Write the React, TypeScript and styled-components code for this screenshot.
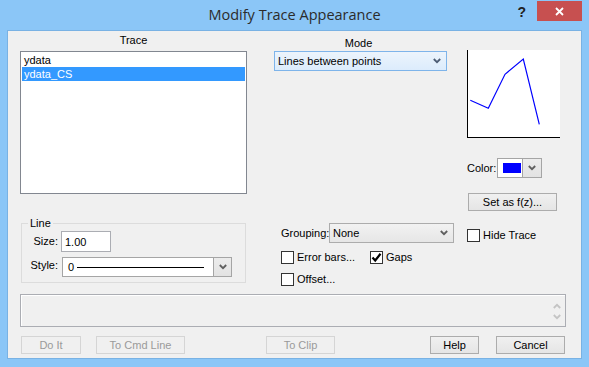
import React from "react";
import styled, { createGlobalStyle } from "styled-components";

const GlobalStyle = createGlobalStyle`
  html, body { margin: 0; padding: 0; background: #8bc6f7; }
  body { font-family: "Liberation Sans", Arial, sans-serif; font-size: 11px; color: #000; }
  * { box-sizing: border-box; }
`;

const Window = styled.div`
  width: 589px;
  height: 367px;
  background: #8bc6f7;
  padding: 0 7px 8px;
  display: flex;
  flex-direction: column;
`;

const TitleBar = styled.div`
  height: 30px;
  display: grid;
  grid-template-columns: 1fr auto 1fr;
  align-items: start;
`;

const Title = styled.div`
  grid-column: 2;
  font-family: "Open Sans", "Noto Sans", sans-serif;
  font-size: 14.5px;
  color: #2b2b2b;
  line-height: 30px;
  white-space: nowrap;
`;

const Controls = styled.div`
  grid-column: 3;
  justify-self: end;
  display: flex;
  align-items: flex-start;
`;

const HelpGlyph = styled.span`
  font-family: "Liberation Sans", Arial, sans-serif;
  font-weight: bold;
  font-size: 14px;
  line-height: 14px;
  color: #222;
  margin: 5px 11px 0 0;
`;

const CloseBtn = styled.div`
  width: 45px;
  height: 20px;
  margin-top: 1px;
  background: #c75050;
  display: flex;
  align-items: center;
  justify-content: center;
`;

const Client = styled.div`
  flex: 1;
  border: 1px solid #79b2e4;
  background: #f0f0f0;
  padding: 3px 15px 0 12px;
  display: flex;
  flex-direction: column;
`;

const TopArea = styled.div`
  display: flex;
  align-items: flex-start;
`;

const Column = styled.div<{ $w: number; $ml?: number }>`
  width: ${(p) => p.$w}px;
  margin-left: ${(p) => p.$ml ?? 0}px;
  display: flex;
  flex-direction: column;
`;

const CenterLabel = styled.div<{ $mt?: number; $pr?: number }>`
  height: 13px;
  line-height: 13px;
  text-align: center;
  margin-top: ${(p) => p.$mt ?? 0}px;
  padding-right: ${(p) => p.$pr ?? 0}px;
`;

const ListBox = styled.div`
  margin-top: 4px;
  height: 143px;
  background: #fff;
  border: 1px solid #828790;
  padding: 1px;
`;

const ListItem = styled.div<{ $sel?: boolean }>`
  height: 14px;
  line-height: 14px;
  padding-left: 2px;
  background: ${(p) => (p.$sel ? "#3399ff" : "transparent")};
  color: ${(p) => (p.$sel ? "#fff" : "#000")};
`;

const Group = styled.div`
  position: relative;
  margin: 29px 0 0 1px;
  width: 225px;
  height: 60px;
  border: 1px solid #dcdcdc;
  padding: 7px 0 0 0;
  display: grid;
  grid-template-columns: 36px auto;
  column-gap: 3px;
  row-gap: 5px;
  align-content: start;
`;

const Legend = styled.span`
  position: absolute;
  top: -7px;
  left: 6px;
  padding: 0 2px;
  background: #f0f0f0;
  line-height: 13px;
`;

const FieldLabel = styled.div<{ $top?: boolean }>`
  text-align: right;
  align-self: ${(p) => (p.$top ? "start" : "center")};
  margin-top: ${(p) => (p.$top ? 2 : 0)}px;
  line-height: 13px;
`;

const TextInput = styled.div`
  width: 50px;
  height: 21px;
  background: #fff;
  border: 1px solid #abadb3;
  padding-left: 3px;
  display: flex;
  align-items: center;
`;

const Combo = styled.div<{ $w: number; $blue?: boolean }>`
  width: ${(p) => p.$w}px;
  height: 20px;
  border: 1px solid ${(p) => (p.$blue ? "#7eb4ea" : "#acacac")};
  background: ${(p) =>
    p.$blue
      ? "linear-gradient(#ecf4fc, #dcecfc)"
      : "linear-gradient(#f2f2f2, #e6e6e6)"};
  display: flex;
  align-items: center;
  justify-content: space-between;
  padding: 0 5px 0 3px;
`;

const FieldCombo = styled.div<{ $w: number; $ml?: number }>`
  width: ${(p) => p.$w}px;
  margin-left: ${(p) => p.$ml ?? 0}px;
  height: 20px;
  border: 1px solid #a5a5a5;
  background: #fff;
  display: flex;
`;

const FieldPart = styled.div`
  flex: 1;
  display: flex;
  align-items: center;
  padding-left: 5px;
`;

const DropPart = styled.div<{ $w: number }>`
  width: ${(p) => p.$w}px;
  background: linear-gradient(#ececec, #e2e2e2);
  border-left: 1px solid #a5a5a5;
  display: flex;
  align-items: center;
  justify-content: center;
`;

const StyleLine = styled.div`
  flex: 1;
  height: 1px;
  background: #000;
  margin: 0 9px 0 3px;
`;

const Swatch = styled.div`
  width: 18px;
  height: 10px;
  background: #0000ff;
`;

const Row = styled.div<{ $mt?: number; $pl?: number }>`
  display: flex;
  align-items: center;
  margin-top: ${(p) => p.$mt ?? 0}px;
  padding-left: ${(p) => p.$pl ?? 0}px;
`;

const InlineLabel = styled.span<{ $w: number }>`
  width: ${(p) => p.$w}px;
  line-height: 13px;
`;

const CheckItem = styled.label<{ $w?: number }>`
  display: flex;
  align-items: center;
  gap: 3px;
  width: ${(p) => (p.$w ? `${p.$w}px` : "auto")};
  line-height: 13px;
`;

const Box = styled.span`
  width: 13px;
  height: 13px;
  border: 1px solid #333;
  background: #fff;
  display: flex;
  align-items: center;
  justify-content: center;
  flex: none;
`;

const Preview = styled.div`
  margin-top: 16px;
  width: 93px;
  height: 88px;
  background: #fff;
  border-left: 1px solid #000;
  border-bottom: 1px solid #000;
`;

const Button = styled.div<{ $w: number; $ml?: number; $disabled?: boolean }>`
  width: ${(p) => p.$w}px;
  height: 18px;
  margin-left: ${(p) => p.$ml ?? 0}px;
  border: 1px solid ${(p) => (p.$disabled ? "#d5d5d5" : "#acacac")};
  background: ${(p) =>
    p.$disabled ? "#f0f0f0" : "linear-gradient(#f0f0f0, #e5e5e5)"};
  color: ${(p) => (p.$disabled ? "#9a9a9a" : "#000")};
  display: flex;
  align-items: center;
  justify-content: center;
  line-height: 13px;
  flex: none;
`;

const MessageBox = styled.div`
  margin-top: 8px;
  height: 33px;
  border: 1px solid #abadb3;
  background: #f0f0f0;
  box-shadow: inset 1px 1px 0 #fff;
  display: flex;
  justify-content: flex-end;
`;

const ScrollCol = styled.div`
  width: 17px;
  display: flex;
  flex-direction: column;
  align-items: center;
  justify-content: space-between;
  padding: 8px 0 6px;
`;

const ButtonRow = styled.div`
  margin-top: 9px;
  display: flex;
  align-items: center;
`;

const Chevron = ({ color = "#5f5f5f", up = false }: { color?: string; up?: boolean }) => (
  <svg width="8" height="6" viewBox="0 0 8 6">
    <polyline
      points={up ? "0.8,5 4,1.8 7.2,5" : "0.8,1 4,4.2 7.2,1"}
      fill="none"
      stroke={color}
      strokeWidth="1.8"
    />
  </svg>
);

const CheckMark = () => (
  <svg width="11" height="11" viewBox="0 0 11 11">
    <polyline points="1.5,5.5 4.2,8.5 9.5,1.8" fill="none" stroke="#000" strokeWidth="2.2" />
  </svg>
);

export default function App() {
  return (
    <>
      <GlobalStyle />
      <Window>
        <TitleBar>
          <Title>Modify Trace Appearance</Title>
          <Controls>
            <HelpGlyph>?</HelpGlyph>
            <CloseBtn>
              <svg width="9" height="9" viewBox="0 0 9 9">
                <path d="M1 1 L8 8 M8 1 L1 8" stroke="#fff" strokeWidth="1.8" />
              </svg>
            </CloseBtn>
          </Controls>
        </TitleBar>
        <Client>
          <TopArea>
            <Column $w={227}>
              <CenterLabel>Trace</CenterLabel>
              <ListBox>
                <ListItem>ydata</ListItem>
                <ListItem $sel>ydata_CS</ListItem>
              </ListBox>
              <Group>
                <Legend>Line</Legend>
                <FieldLabel>Size:</FieldLabel>
                <TextInput>1.00</TextInput>
                <FieldLabel $top>Style:</FieldLabel>
                <FieldCombo $w={170} $ml={1}>
                  <FieldPart>
                    0<StyleLine />
                  </FieldPart>
                  <DropPart $w={18}>
                    <Chevron />
                  </DropPart>
                </FieldCombo>
              </Group>
            </Column>
            <Column $w={180} $ml={27}>
              <CenterLabel $mt={3} $pr={11}>Mode</CenterLabel>
              <Row $mt={1}>
                <Combo $w={173} $blue>
                  <span>Lines between points</span>
                  <Chevron color="#4d5d75" />
                </Combo>
              </Row>
              <Row $mt={152} $pl={7}>
                <InlineLabel $w={48}>Grouping:</InlineLabel>
                <Combo $w={125}>
                  <span>None</span>
                  <Chevron />
                </Combo>
              </Row>
              <Row $mt={8} $pl={7}>
                <CheckItem $w={89}>
                  <Box />
                  Error bars...
                </CheckItem>
                <CheckItem>
                  <Box>
                    <CheckMark />
                  </Box>
                  Gaps
                </CheckItem>
              </Row>
              <Row $mt={9} $pl={7}>
                <CheckItem>
                  <Box />
                  Offset...
                </CheckItem>
              </Row>
            </Column>
            <Column $w={93} $ml={13}>
              <Preview>
                <svg width="92" height="87" viewBox="0 0 92 87">
                  <polyline
                    points="2.3,50.3 20.3,58.3 37,24.3 55.3,9 71.3,74.3"
                    fill="none"
                    stroke="#0000ff"
                    strokeWidth="1.2"
                  />
                </svg>
              </Preview>
              <Row $mt={20}>
                <InlineLabel $w={30}>Color:</InlineLabel>
                <FieldCombo $w={45}>
                  <FieldPart>
                    <Swatch />
                  </FieldPart>
                  <DropPart $w={19}>
                    <Chevron />
                  </DropPart>
                </FieldCombo>
              </Row>
              <Row $mt={15}>
                <Button $w={89} $ml={1}>Set as f(z)...</Button>
              </Row>
              <Row $mt={18}>
                <CheckItem>
                  <Box />
                  Hide Trace
                </CheckItem>
              </Row>
            </Column>
          </TopArea>
          <MessageBox>
            <ScrollCol>
              <Chevron color="#c4c4c4" up />
              <Chevron color="#c4c4c4" />
            </ScrollCol>
          </MessageBox>
          <ButtonRow>
            <Button $w={60} $ml={1} $disabled>Do It</Button>
            <Button $w={89} $ml={15} $disabled>To Cmd Line</Button>
            <Button $w={69} $ml={81} $disabled>To Clip</Button>
            <Button $w={49} $ml={95}>Help</Button>
            <Button $w={69} $ml={17}>Cancel</Button>
          </ButtonRow>
        </Client>
      </Window>
    </>
  );
}
